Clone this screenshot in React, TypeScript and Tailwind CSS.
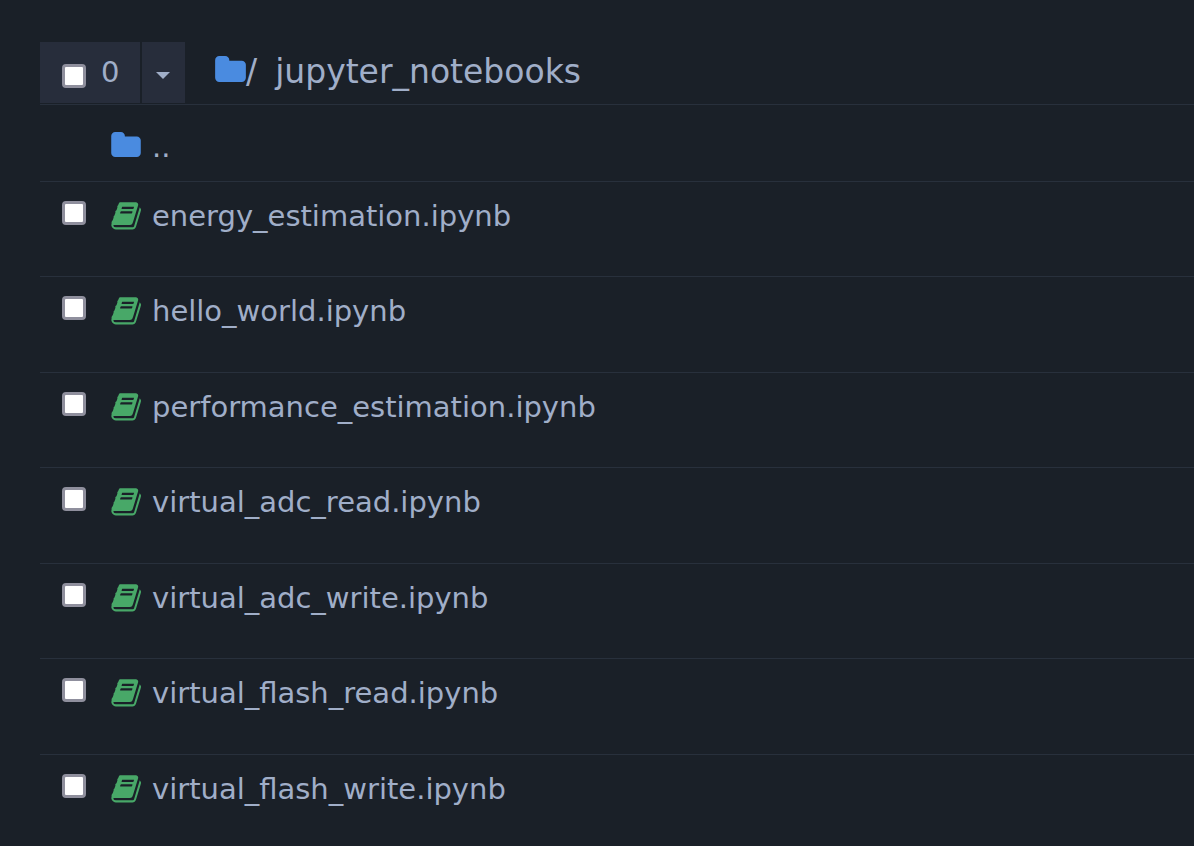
import React from "react";

const notebooks: string[] = [
  "energy_estimation.ipynb",
  "hello_world.ipynb",
  "performance_estimation.ipynb",
  "virtual_adc_read.ipynb",
  "virtual_adc_write.ipynb",
  "virtual_flash_read.ipynb",
  "virtual_flash_write.ipynb",
];

function FolderIcon({ className }: { className: string }) {
  return (
    <svg viewBox="0 0 1664 1408" className={className} fill="currentColor" aria-hidden="true">
      <path d="M1664 480v704q0 92-66 158t-158 66H224q-92 0-158-66T0 1184V224q0-92 66-158T224 0h320q92 0 158 66t66 158v32h672q92 0 158 66t66 158z" />
    </svg>
  );
}

function BookIcon({ className }: { className: string }) {
  return (
    <svg viewBox="-20 128 1684 1556" className={className} fill="currentColor" aria-hidden="true">
      <path d="M1639 478q40 57 18 129l-275 906q-19 64-76.5 107.5t-122.5 43.5h-923q-77 0-148.5-53.5t-99.5-131.5q-24-67-2-127 0-4 3-27t4-37q1-8-3-21.5t-3-19.5q2-11 8-21t16.5-23.5 16.5-23.5q23-38 45-91.5t30-91.5q3-10 .5-30t-.5-28q3-11 17-28t17-23q21-36 42-92t25-90q1-9-2.5-32t.5-28q4-13 22-30.5t22-22.5q19-26 42.5-84.5t27.5-96.5q1-8-3-25.5t-2-26.5q2-8 9-18t18-23 17-21q8-12 16.5-30.5t15-35 16-36 19.5-32 26.5-23.5 36-11.5 47.5 5.5l-1 3q38-9 51-9h761q74 0 114 56t18 130l-274 906q-36 119-71.5 153.5t-128.5 34.5h-869q-27 0-38 15-11 16-1 43 24 70 144 70h923q29 0 56-15.5t35-41.5l300-987q7-22 5-57 38 15 59 43zm-1064 2q-4 13 2 22.5t20 9.5h608q13 0 25.5-9.5t16.5-22.5l21-64q4-13-2-22.5t-20-9.5h-608q-13 0-25.5 9.5t-16.5 22.5zm-83 256q-4 13 2 22.5t20 9.5h608q13 0 25.5-9.5t16.5-22.5l21-64q4-13-2-22.5t-20-9.5h-608q-13 0-25.5 9.5t-16.5 22.5z" />
    </svg>
  );
}

const checkbox =
  "size-6 shrink-0 appearance-none rounded-[4px] border-3 border-[#8f8f9d] bg-white checked:bg-[#4a89dc]";

export default function App() {
  return (
    <main className="min-h-screen overflow-hidden bg-[#1a2028] pt-[42px] pl-10 font-['DejaVu_Sans',sans-serif] text-[29px] leading-[30px] text-[#a0aec8]">
      <header className="flex items-start border-b border-[#28303c] pb-px">
        <div className="flex gap-0.5">
          <label className="flex h-[61px] w-[100px] items-center bg-[#272d3b] pb-0.5 pl-[22px]">
            <input type="checkbox" aria-label="Select all" className={`${checkbox} mt-2`} />
            <span className="pl-[15px]">0</span>
          </label>
          <button
            type="button"
            aria-label="Selection options"
            className="flex h-[61px] w-[43px] items-center justify-center bg-[#272d3b] pr-0.5"
          >
            <svg viewBox="0 0 14 7" className="mt-1.5 h-[7px] w-3.5" fill="currentColor" aria-hidden="true">
              <path d="M0 0h14L7 7z" />
            </svg>
          </button>
        </div>
        <nav aria-label="Breadcrumb" className="flex items-center pt-[9px] pl-[30px] text-[33px] leading-[42px]">
          <a href="#root" aria-label="Root folder" className="text-[#4a8be0]">
            <FolderIcon className="mb-1.5 h-[26px] w-[31px]" />
          </a>
          <span>/</span>
          <a href="#jupyter_notebooks" className="pl-[18px]">
            jupyter_notebooks
          </a>
        </nav>
      </header>
      <ul>
        <li className="flex h-[77px] border-b border-[#28303c] pt-[27px] pl-[71px]">
          <a href="#parent" className="flex items-start gap-[11px]">
            <FolderIcon className="h-[25px] w-[30px] text-[#4a8be0]" />
            <span>..</span>
          </a>
        </li>
        {notebooks.map((name) => (
          <li
            key={name}
            className="flex h-[95px] items-start border-b border-[#28303c] pt-[19px] pl-[22px] odd:h-24"
          >
            <input type="checkbox" aria-label={`Select ${name}`} className={checkbox} />
            <a href={`#${name}`} className="flex items-start gap-[11px] pl-[25px]">
              <BookIcon className="mt-px h-7 w-[30px] text-[#48a868]" />
              <span>{name}</span>
            </a>
          </li>
        ))}
      </ul>
    </main>
  );
}
